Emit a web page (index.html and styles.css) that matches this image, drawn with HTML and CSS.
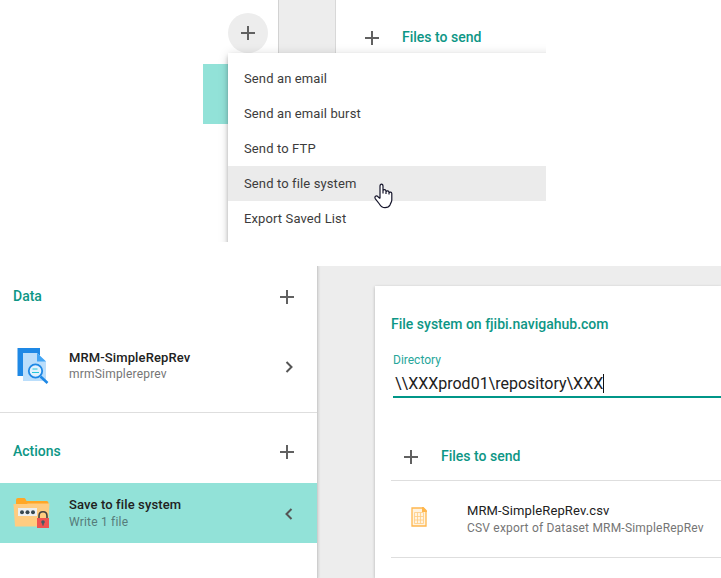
FILE: index.html
```html
<!DOCTYPE html>
<html lang="en">
<head>
<meta charset="utf-8">
<title>File system action</title>
<link rel="stylesheet" href="styles.css">
</head>
<body>
<section class="picker">
  <div class="picker-side">
    <div class="add-button"><svg class="plus" viewBox="0 0 14 14"><path d="M0 7H14M7 0V14"/></svg></div>
    <div class="picker-selected"></div>
  </div>
  <div class="picker-gutter"></div>
  <div class="picker-main">
    <svg class="plus" viewBox="0 0 14 14"><path d="M0 7H14M7 0V14"/></svg>
    <h2 class="heading">Files to send</h2>
  </div>
  <ul class="menu">
    <li>Send an email</li>
    <li>Send an email burst</li>
    <li>Send to FTP</li>
    <li class="hover">Send to file system</li>
    <li>Export Saved List</li>
  </ul>
  <svg class="cursor" viewBox="0 0 20 26"><path d="M6 15.5V3.2C6 .4 9 .4 9 3.2V10.5V7.6C9.4 6.2 11.700 6.400 12 8V11V8.700C12.500 7.400 14.700 7.600 15 9.200V11.500V9.900C15.700 8.700 17.600 9 17.800 10.500V17C17.800 19 16.500 20 16 22C15 24.200 13 24.700 11 24.700C8 24.700 6.500 23 5.400 21L1.400 15.800C0 13.600 2.300 12.100 4 13.700L6 15.500"/></svg>
</section>
<section class="editor">
  <aside class="sidebar">
    <header class="group-head"><h2 class="heading">Data</h2><svg class="plus" viewBox="0 0 14 14"><path d="M0 7H14M7 0V14"/></svg></header>
    <div class="entry data-entry">
      <svg class="entry-icon" viewBox="0 0 40 40">
        <path fill="#1e88e5" d="M5.500 3H28V31H5.500Z"/>
        <path fill="#bbdefb" d="M11 8H25L34 16.500V36H11Z"/>
        <path fill="#42a5f5" d="M25 8V16.500H34Z"/>
        <path stroke="#1e88e5" stroke-width="2.600" d="M28.500 31.500L35.500 38"/>
        <circle cx="23.500" cy="26" r="6.700" fill="#e3f2fd" stroke="#1e88e5" stroke-width="1.800"/>
        <path stroke="#26c6da" stroke-width="1.200" d="M20.500 24H25.500M20 27.500H27"/>
      </svg>
      <div class="entry-text"><strong>MRM-SimpleRepRev</strong><small>mrmSimplereprev</small></div>
      <svg class="chevron" viewBox="0 0 8 12"><path d="M1.500 1L6.500 6L1.500 11"/></svg>
    </div>
    <header class="group-head"><h2 class="heading">Actions</h2><svg class="plus" viewBox="0 0 14 14"><path d="M0 7H14M7 0V14"/></svg></header>
    <div class="entry selected">
      <svg class="entry-icon" viewBox="0 0 40 40">
        <path fill="#ffa726" d="M4 7Q4 5 6 5H12Q13 5 13.500 6L14.500 8H34.500Q36.500 8 36.500 10V13H4Z"/>
        <path fill="#ffcc80" d="M1.500 11H14.500L16 10.500H37.500L36 33.500H3Z"/>
        <path fill="#eceff1" d="M6 15H25V23H6Z"/>
        <g fill="#37474f"><circle cx="10" cy="19.200" r="2"/><circle cx="15.500" cy="19.200" r="2"/><circle cx="21" cy="19.200" r="2"/></g>
        <path fill="none" stroke="#424242" stroke-width="1.600" d="M27 25V23C27 17.300 35 17.300 35 23V25"/>
        <path fill="#ef5350" d="M25 25H37V35H25Z"/>
        <circle cx="31" cy="29" r="1.800" fill="#455a64"/><path fill="#455a64" d="M30.300 29H31.700V32.500H30.300Z"/>
      </svg>
      <div class="entry-text"><strong>Save to file system</strong><small>Write 1 file</small></div>
      <svg class="chevron" viewBox="0 0 8 12"><path d="M6.500 1L1.500 6L6.500 11"/></svg>
    </div>
  </aside>
  <main class="card">
    <h1 class="heading">File system on fjibi.navigahub.com</h1>
    <div class="field">
      <label>Directory</label>
      <div class="field-value"><span>\\XXXprod01\repository\XXX</span><i class="caret"></i></div>
    </div>
    <div class="files-head"><svg class="plus" viewBox="0 0 14 14"><path d="M0 7H14M7 0V14"/></svg><h2 class="heading">Files to send</h2></div>
    <div class="file">
      <svg class="file-icon" viewBox="0 0 16 20">
        <path fill="#fff3e0" stroke="#ffb74d" stroke-width="1.300" d="M1 1H12L15 4V19H1Z"/>
        <path fill="#ffb74d" d="M11 0H12.500L16 3.500V5H11Z"/>
        <path fill="none" stroke="#ffcc80" stroke-width=".8" d="M3.500 5.500H12.500V16.500H3.500ZM3.500 9.500H12.500M3.500 13H12.500M6.500 5.500V16.500M9.500 5.500V16.500"/>
      </svg>
      <div class="entry-text"><span class="file-name">MRM-SimpleRepRev.csv</span><small>CSV export of Dataset MRM-SimpleRepRev</small></div>
    </div>
  </main>
</section>
</body>
</html>
```
FILE: styles.css
```css
* { box-sizing: border-box; }
body {
  margin: 0;
  width: 721px;
  height: 578px;
  overflow: hidden;
  background: #fff;
  font-family: Roboto, sans-serif;
  color: #212121;
}
svg { display: block; flex: none; }
.plus { width: 14px; height: 14px; fill: none; stroke: #616161; stroke-width: 2; }
.chevron { width: 8px; height: 12px; fill: none; stroke: #555; stroke-width: 2; }
.heading { margin: 0; font-size: 14px; line-height: 20px; font-weight: 500; color: #0d9685; white-space: nowrap; }

.picker { position: relative; display: flex; width: 546px; height: 242px; overflow: hidden; }
.picker-side { width: 278px; padding-top: 13px; }
.add-button { display: flex; align-items: center; justify-content: center; width: 40px; height: 40px; margin-left: 228px; border-radius: 50%; background: #ededed; }
.picker-selected { width: 75px; height: 60px; margin: 11px 0 0 203px; background: #92e2d8; }
.picker-gutter { width: 58px; background: #ededed; border-left: 1px solid #d2d2d2; border-right: 1px solid #d8d8d8; }
.picker-main { display: flex; align-items: flex-start; gap: 23px; padding: 27px 0 0 29px; }
.picker-main .plus { margin-top: 4px; }
.menu {
  position: absolute;
  left: 228px;
  top: 53px;
  width: 330px;
  height: 220px;
  margin: 0;
  padding: 8px 0;
  list-style: none;
  background: #fff;
  box-shadow: 0 2px 4px -1px rgba(0,0,0,.2), 0 4px 5px rgba(0,0,0,.14), 0 1px 10px rgba(0,0,0,.14);
  font-size: 13px;
  color: #3c3c3c;
}
.menu li { height: 35px; padding-left: 16px; line-height: 35px; white-space: nowrap; letter-spacing: .12px; }
.menu .hover { background: #ebebeb; }
.cursor { position: absolute; left: 374px; top: 183px; width: 20px; height: 26px; fill: #fff; stroke: #15152b; stroke-width: 1.200; }

.editor { display: flex; height: 312px; margin-top: 24px; background: #ededed; overflow: hidden; }
.sidebar { width: 318px; margin-right: 57px; background: #fff; border-right: 1px solid #cecece; box-shadow: 1px 0 2px rgba(0,0,0,.1); }
.group-head { display: flex; align-items: center; justify-content: space-between; height: 62px; padding: 0 23px 0 13px; }
.group-head .heading { margin-bottom: 2px; }
.entry { display: flex; align-items: center; height: 60px; padding: 0 24px 0 12px; }
.entry-icon { width: 40px; height: 40px; margin-right: 17px; }
.entry-text { display: flex; flex: 1; flex-direction: column; align-items: flex-start; padding-top: 1px; white-space: nowrap; }
.entry strong { font-size: 13px; line-height: 17px; font-weight: 500; letter-spacing: .12px; }
small { padding-top: 1px; font-size: 12px; line-height: 17px; color: #757575; letter-spacing: .2px; }
.data-entry { height: 85px; padding-bottom: 9px; border-bottom: 1px solid #dedede; }
.data-entry .entry-icon { margin-top: -2px; }
.data-entry .entry-text { padding-top: 0; }
.data-entry small { padding-top: 0; }
.data-entry .chevron { margin-top: 2px; }
.data-entry + .group-head { height: 70px; padding-top: 8px; }
.selected { background: #92e2d8; }
.selected small { color: #567c7a; }
.selected .chevron { margin-top: 2px; }

.card { flex: 1; margin-top: 20px; padding: 28px 0 0 16px; background: #fff; box-shadow: 0 1px 3px rgba(0,0,0,.25); }
.field { margin: 18px 0 0 2px; border-bottom: 2px solid #009688; }
.field label { display: block; font-size: 12px; line-height: 16px; color: #26a69a; }
.field-value { display: flex; align-items: center; height: 28px; padding: 2px 0 0 2px; font-size: 16px; white-space: nowrap; }
.caret { width: 1px; height: 19px; background: #111; }
.files-head { display: flex; align-items: center; gap: 23px; height: 49px; margin-top: 34px; padding-left: 13px; border-bottom: 1px solid #dedede; }
.files-head .plus { margin-top: 2px; }
.file { display: flex; align-items: center; height: 77px; padding-left: 20px; border-bottom: 1px solid #dedede; }
.file-icon { width: 16px; height: 20px; margin: -4px 40px 0 0; }
.file-name { font-size: 13px; line-height: 17px; letter-spacing: .13px; }
```
